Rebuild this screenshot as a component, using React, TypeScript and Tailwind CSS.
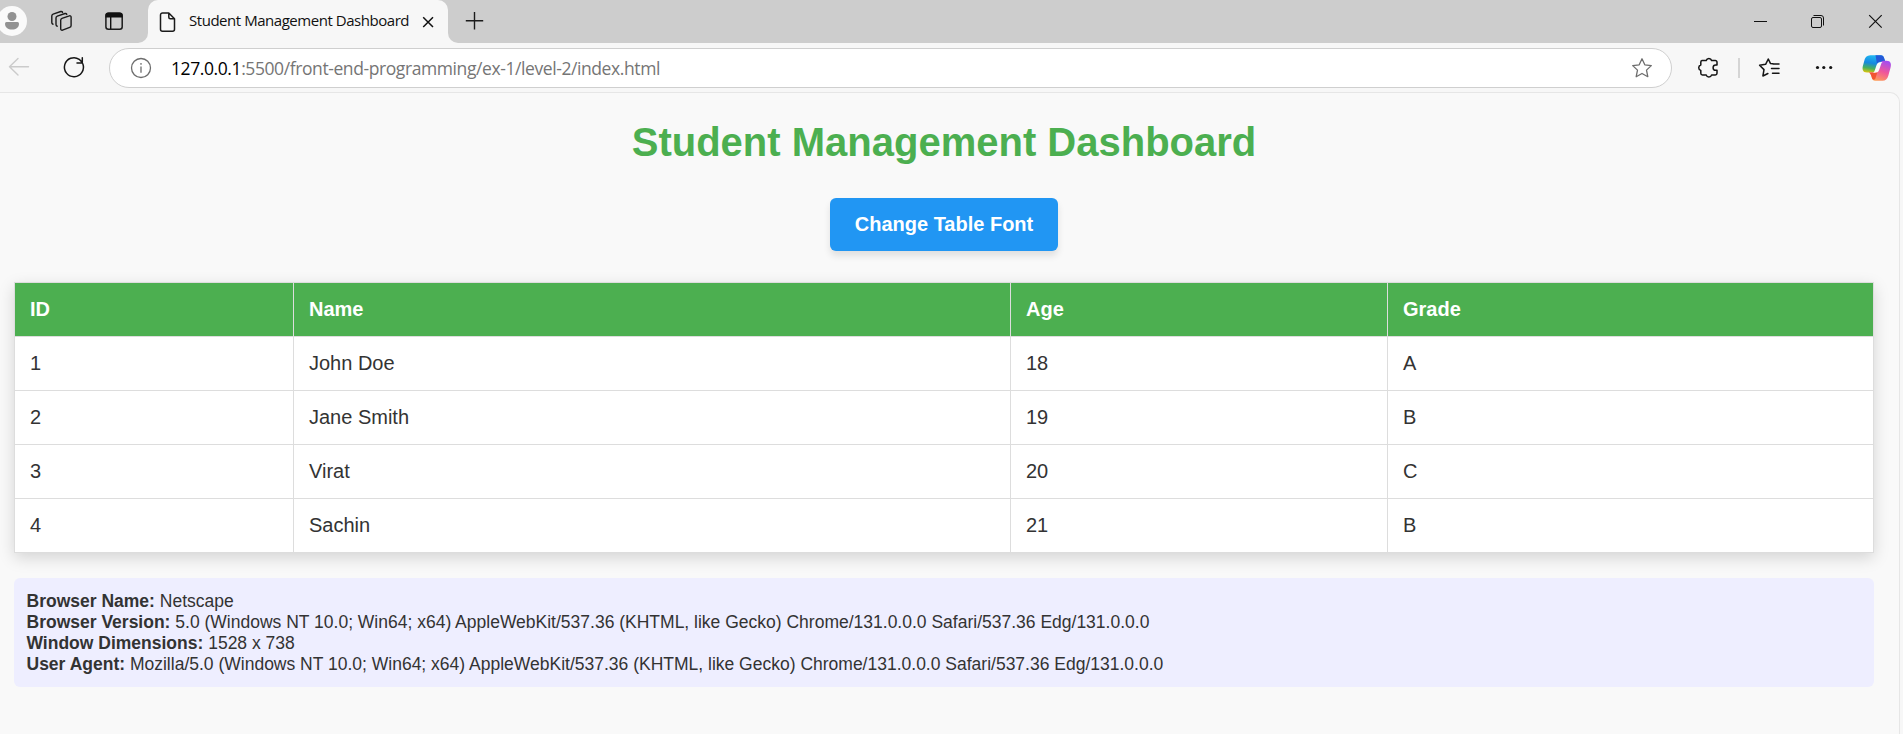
import React from "react";

const students = [
  ["1", "John Doe", "18", "A"],
  ["2", "Jane Smith", "19", "B"],
  ["3", "Virat", "20", "C"],
  ["4", "Sachin", "21", "B"],
];

const agent = "5.0 (Windows NT 10.0; Win64; x64) AppleWebKit/537.36 (KHTML, like Gecko) Chrome/131.0.0.0 Safari/537.36 Edg/131.0.0.0";

const info = [
  ["Browser Name:", "Netscape"],
  ["Browser Version:", agent],
  ["Window Dimensions:", "1528 x 738"],
  ["User Agent:", "Mozilla/" + agent],
];

function TabStrip() {
  return (
    <div className="flex h-[43px] w-full bg-[#cdcdcd]">
      <svg className="h-[43px] w-[138px] shrink-0" viewBox="0 0 138 43" fill="none">
        <circle cx="12" cy="21" r="15" fill="#fafafa" />
        <circle cx="12" cy="16.5" r="4.5" fill="#929292" />
        <path d="M6.5 22h11a1.5 1.5 0 0 1 1.500 1.500c0 4-3 6-7 6s-7-2-7-6A1.500 1.500 0 0 1 6.500 22z" fill="#929292" />
        <g stroke="#1b1b1b" strokeWidth="1.400" strokeLinejoin="round" strokeLinecap="round">
          <path d="M62 18.300l7.300-2.500a1.300 1.300 0 0 1 1.800 1.300v8.300a2 2 0 0 1-1.400 1.900l-7.200 2.900a1.300 1.300 0 0 1-1.800-1.300v-8.700a2 2 0 0 1 1.300-1.900z" />
          <path d="M57.200 26.200a1.600 1.600 0 0 1-1.200-1.600v-6.600a2 2 0 0 1 1.300-1.900l7.700-2.600a1.600 1.600 0 0 1 1.800.9" />
          <path d="M53 24.200a1.600 1.600 0 0 1-1.200-1.600V16a2 2 0 0 1 1.300-1.900l7.700-2.600a1.600 1.600 0 0 1 1.800.9" />
        </g>
        <rect x="105.900" y="13.200" width="16.300" height="16.100" rx="2.500" stroke="#1b1b1b" strokeWidth="1.500" />
        <path d="M105.500 17.500v-2a3 3 0 0 1 3-3h11a3 3 0 0 1 3 3v2zM110 17h1.400v12H110z" fill="#111" />
      </svg>
      <div className="h-full w-[10px] bg-[#f7f7f7]">
        <div className="h-full rounded-br-[10px] bg-[#cdcdcd]" />
      </div>
      <div className="h-full w-[300px] bg-[#cdcdcd]">
        <div className="flex h-full items-center rounded-t-[10px] bg-[#f7f7f7] pl-[11px]">
          <svg className="h-[22px] w-[18px] shrink-0" viewBox="0 0 18 22" fill="none" stroke="#1b1b1b" strokeWidth="1.500" strokeLinejoin="round">
            <path d="M3.500 2h6.300L15.500 7.700v10.500a2 2 0 0 1-2 2h-10a2 2 0 0 1-2-2V4a2 2 0 0 1 2-2zM9.800 2v4.200a1.500 1.500 0 0 0 1.500 1.500h4.200" />
          </svg>
          <span className="ml-[12px] w-[224px] whitespace-nowrap pb-[3px] font-['Open_Sans','Noto_Sans',sans-serif] text-[15px] leading-[20px] tracking-[-0.46px] text-[#111]">
            Student Management Dashboard
          </span>
          <svg className="ml-[9px] h-[12px] w-[12px] shrink-0" viewBox="0 0 12 12" stroke="#111" strokeWidth="1.500">
            <path d="M1.200 1.200l9.800 9.800M11 1.200L1.200 11" />
          </svg>
        </div>
      </div>
      <div className="h-full w-[10px] bg-[#f7f7f7]">
        <div className="h-full rounded-bl-[10px] bg-[#cdcdcd]" />
      </div>
      <svg className="h-[43px] w-[34px] shrink-0" viewBox="0 0 34 43" stroke="#1b1b1b" strokeWidth="1.400">
        <path d="M7.800 20.700h17.400M16.500 12v17.400" />
      </svg>
      <svg className="ml-auto h-[43px] w-[153px] shrink-0" viewBox="0 0 153 43" fill="none" stroke="#111" strokeWidth="1">
        <path d="M4 21.500h13" />
        <rect x="61.500" y="17.500" width="10" height="10" rx="1.500" />
        <path d="M63.500 15.500h7.500a2.500 2.500 0 0 1 2.500 2.500v7.500" />
        <path d="M119.200 15.200l12.500 12.500M131.700 15.200l-12.500 12.500" strokeWidth="1.200" />
      </svg>
    </div>
  );
}

function Toolbar() {
  return (
    <div className="flex h-[49px] w-full bg-[#f7f7f7] pt-[5px]">
      <svg className="h-[40px] w-[109px] shrink-0" viewBox="0 0 109 40" fill="none" strokeLinecap="round" strokeLinejoin="round">
        <path d="M9.500 18.800h19M18 10.600l-8.500 8.200 8.500 8.200" stroke="#cbcbcb" strokeWidth="1.400" />
        <path d="M82.800 15.800A9.500 9.500 0 1 1 79.200 11.300L82.300 14.500M82.300 9.800v5.200h-5.300" stroke="#161616" strokeWidth="1.500" />
      </svg>
      <div className="flex h-[40px] w-[1563px] items-center rounded-full border border-[#cfcfcf] bg-white pl-[20px] pr-[18px]">
        <svg className="h-[22px] w-[22px] shrink-0" viewBox="0 0 22 22" fill="none" stroke="#6d6d6d" strokeWidth="1.300">
          <circle cx="11" cy="11" r="9.500" />
          <path d="M11 9.500v6.300M11 6v1.800" />
        </svg>
        <span className="ml-[19px] whitespace-nowrap pb-px font-['Open_Sans','Noto_Sans',sans-serif] text-[17.500px] leading-[24px] tracking-[-0.41px] text-[#757575]">
          <span className="text-black">127.0.0.1</span>:5500/front-end-programming/ex-1/level-2/index.html
        </span>
        <svg className="ml-auto h-[22px] w-[22px] shrink-0" viewBox="0 0 22 22" fill="none" stroke="#6d6d6d" strokeWidth="1.300" strokeLinejoin="round">
          <path d="M11 1.800l2.800 6 6.500.8-4.800 4.500 1.300 6.600L11 16.500l-5.800 3.200 1.300-6.600L1.700 8.600l6.500-.8z" />
        </svg>
      </div>
      <svg className="h-[40px] w-[231px] shrink-0" viewBox="0 0 231 40" fill="none" strokeLinejoin="round" strokeLinecap="round">
        <defs>
          <linearGradient id="cool" x1="0.200" y1="0" x2="0" y2="1">
            <stop offset="0" stopColor="#1fb4f0" />
            <stop offset="0.400" stopColor="#1688e0" />
            <stop offset="0.700" stopColor="#48b05c" />
            <stop offset="1" stopColor="#f4c900" />
          </linearGradient>
          <linearGradient id="warm" x1="0.700" y1="0" x2="0.300" y2="1">
            <stop offset="0" stopColor="#a44df0" />
            <stop offset="0.500" stopColor="#f0569a" />
            <stop offset="1" stopColor="#ffa055" />
          </linearGradient>
        </defs>
        <path d="M30.500 12.500h3.700a2.800 2.800 0 0 1 5.400 0h3.700a1.700 1.700 0 0 1 1.700 1.700v2.900h-1.300a2.600 2.600 0 0 0 0 5.200H45v2.900a1.700 1.700 0 0 1-1.700 1.700h-3.700a2.800 2.800 0 0 1-5.400 0h-3.700a1.700 1.700 0 0 1-1.700-1.700v-2.800a2.800 2.800 0 0 1 0-5.400v-2.800a1.700 1.700 0 0 1 1.300-1.700z" stroke="#151515" strokeWidth="1.500" />
        <path d="M67 10v20" stroke="#cfcfcf" strokeWidth="1.700" strokeLinecap="butt" />
        <path d="M101 15.800l-2.600-.4L96.300 11l-2.700 5.300-6 .9 4.400 4.400-1.100 6.400 5-2.500M101 16h6M99.500 20.600h7.500M100.500 25.200h6.500" stroke="#151515" strokeWidth="1.500" />
        <g fill="#151515">
          <circle cx="145.500" cy="19.500" r="1.600" />
          <circle cx="151.800" cy="19.500" r="1.600" />
          <circle cx="158.700" cy="19.500" r="1.600" />
        </g>
        <path d="M199.500 7.200H209c2.600 0 3.200 2.800 4.300 7.300h-4c-2.600 0-3.200 1.200-4 3.500l-1.500 4.500c-.6 1.800-1.400 2-3.300 2H195c-4.500 0-5-3.500-4-7l1.500-5.500c1-3.800 3.500-4.800 7-4.800z" fill="url(#cool)" />
        <path d="M203.500 7.200h5.500c2.600 0 3.200 2.800 4.300 6.300h-4c-2.600 0-3.500 1-4.200 3.200z" fill="#2459d8" />
        <path d="M210.500 32.800h-7.500c-2.900 0-2.800-3-3.900-5.500-.5-1-1-2.300-2.200-2.800h5.500c2.500 0 3.200-1.200 3.900-3.200l2-6c.6-1.800 1.300-2.600 3.200-2.600h3c4.500 0 5 3.500 4 7l-2.200 8c-1 3.500-2.800 5.100-5.800 5.100z" fill="url(#warm)" />
        <path d="M197 24.500h5.500c1.700 0 2.700-.5 3.300-1.700l-2.400 7.700c-.5 1.600-2.900 1.600-3.500-.5-.7-2.200-1-4.500-2.900-5.500z" fill="#f25432" />
        <path d="M201 24.700c1.100-.4 1.500-1.500 1.900-2.700l1.500-4.500c.9-2.700 2.300-3.500 5.600-3.500h.6c-.9.600-1.300 1.500-1.700 2.700l-1.700 5c-.8 2.400-2.100 3-5 3z" fill="#fbfbfb" />
      </svg>
    </div>
  );
}

export default function App() {
  return (
    <div className="h-[734px] w-full overflow-hidden bg-[#f7f7f7]">
      <TabStrip />
      <Toolbar />
      <main className="flex h-[642px] w-[1900px] flex-col items-center rounded-tr-[10px] border-r border-t border-[#e6e6e6] bg-[#f9f9f9] pl-[14px] pr-[25px] font-['Liberation_Sans',Arial,sans-serif] text-[#333]">
        <h1 className="mt-[26px] whitespace-nowrap text-[40px] font-bold leading-[46px] text-[#4caf50]">Student Management Dashboard</h1>
        <button className="mt-[33px] h-[53px] w-[228px] shrink-0 whitespace-nowrap rounded-[6px] bg-[#2196f3] pb-[2px] text-[20px] font-bold text-white shadow-[0_5px_7px_rgba(0,0,0,0.1)]">
          Change Table Font
        </button>
        <table className="mt-[31px] w-[1860px] table-fixed border-collapse bg-white text-left text-[20px] leading-[23px] shadow-[0_5px_15px_rgba(0,0,0,0.15)]">
          <colgroup>
            <col className="w-[279px]" />
            <col className="w-[717px]" />
            <col className="w-[377px]" />
            <col />
          </colgroup>
          <thead>
            <tr className="h-[54px] bg-[#4caf50] text-white">
              {["ID", "Name", "Age", "Grade"].map((h) => (
                <th key={h} className="border border-[#ddd] px-[15px] py-0 font-bold">{h}</th>
              ))}
            </tr>
          </thead>
          <tbody>
            {students.map((row) => (
              <tr key={row[0]} className="h-[54px]">
                {row.map((cell, i) => (
                  <td key={i} className="border border-[#ddd] px-[15px] py-0">{cell}</td>
                ))}
              </tr>
            ))}
          </tbody>
        </table>
        <section className="mt-[25px] h-[109px] w-full rounded-[6px] bg-[#eef] px-[12.500px] pt-[13px] text-[17.500px] leading-[21px]">
          {info.map(([label, value]) => (
            <p key={label} className="whitespace-nowrap">
              <strong>{label}</strong> {value}
            </p>
          ))}
        </section>
      </main>
    </div>
  );
}
